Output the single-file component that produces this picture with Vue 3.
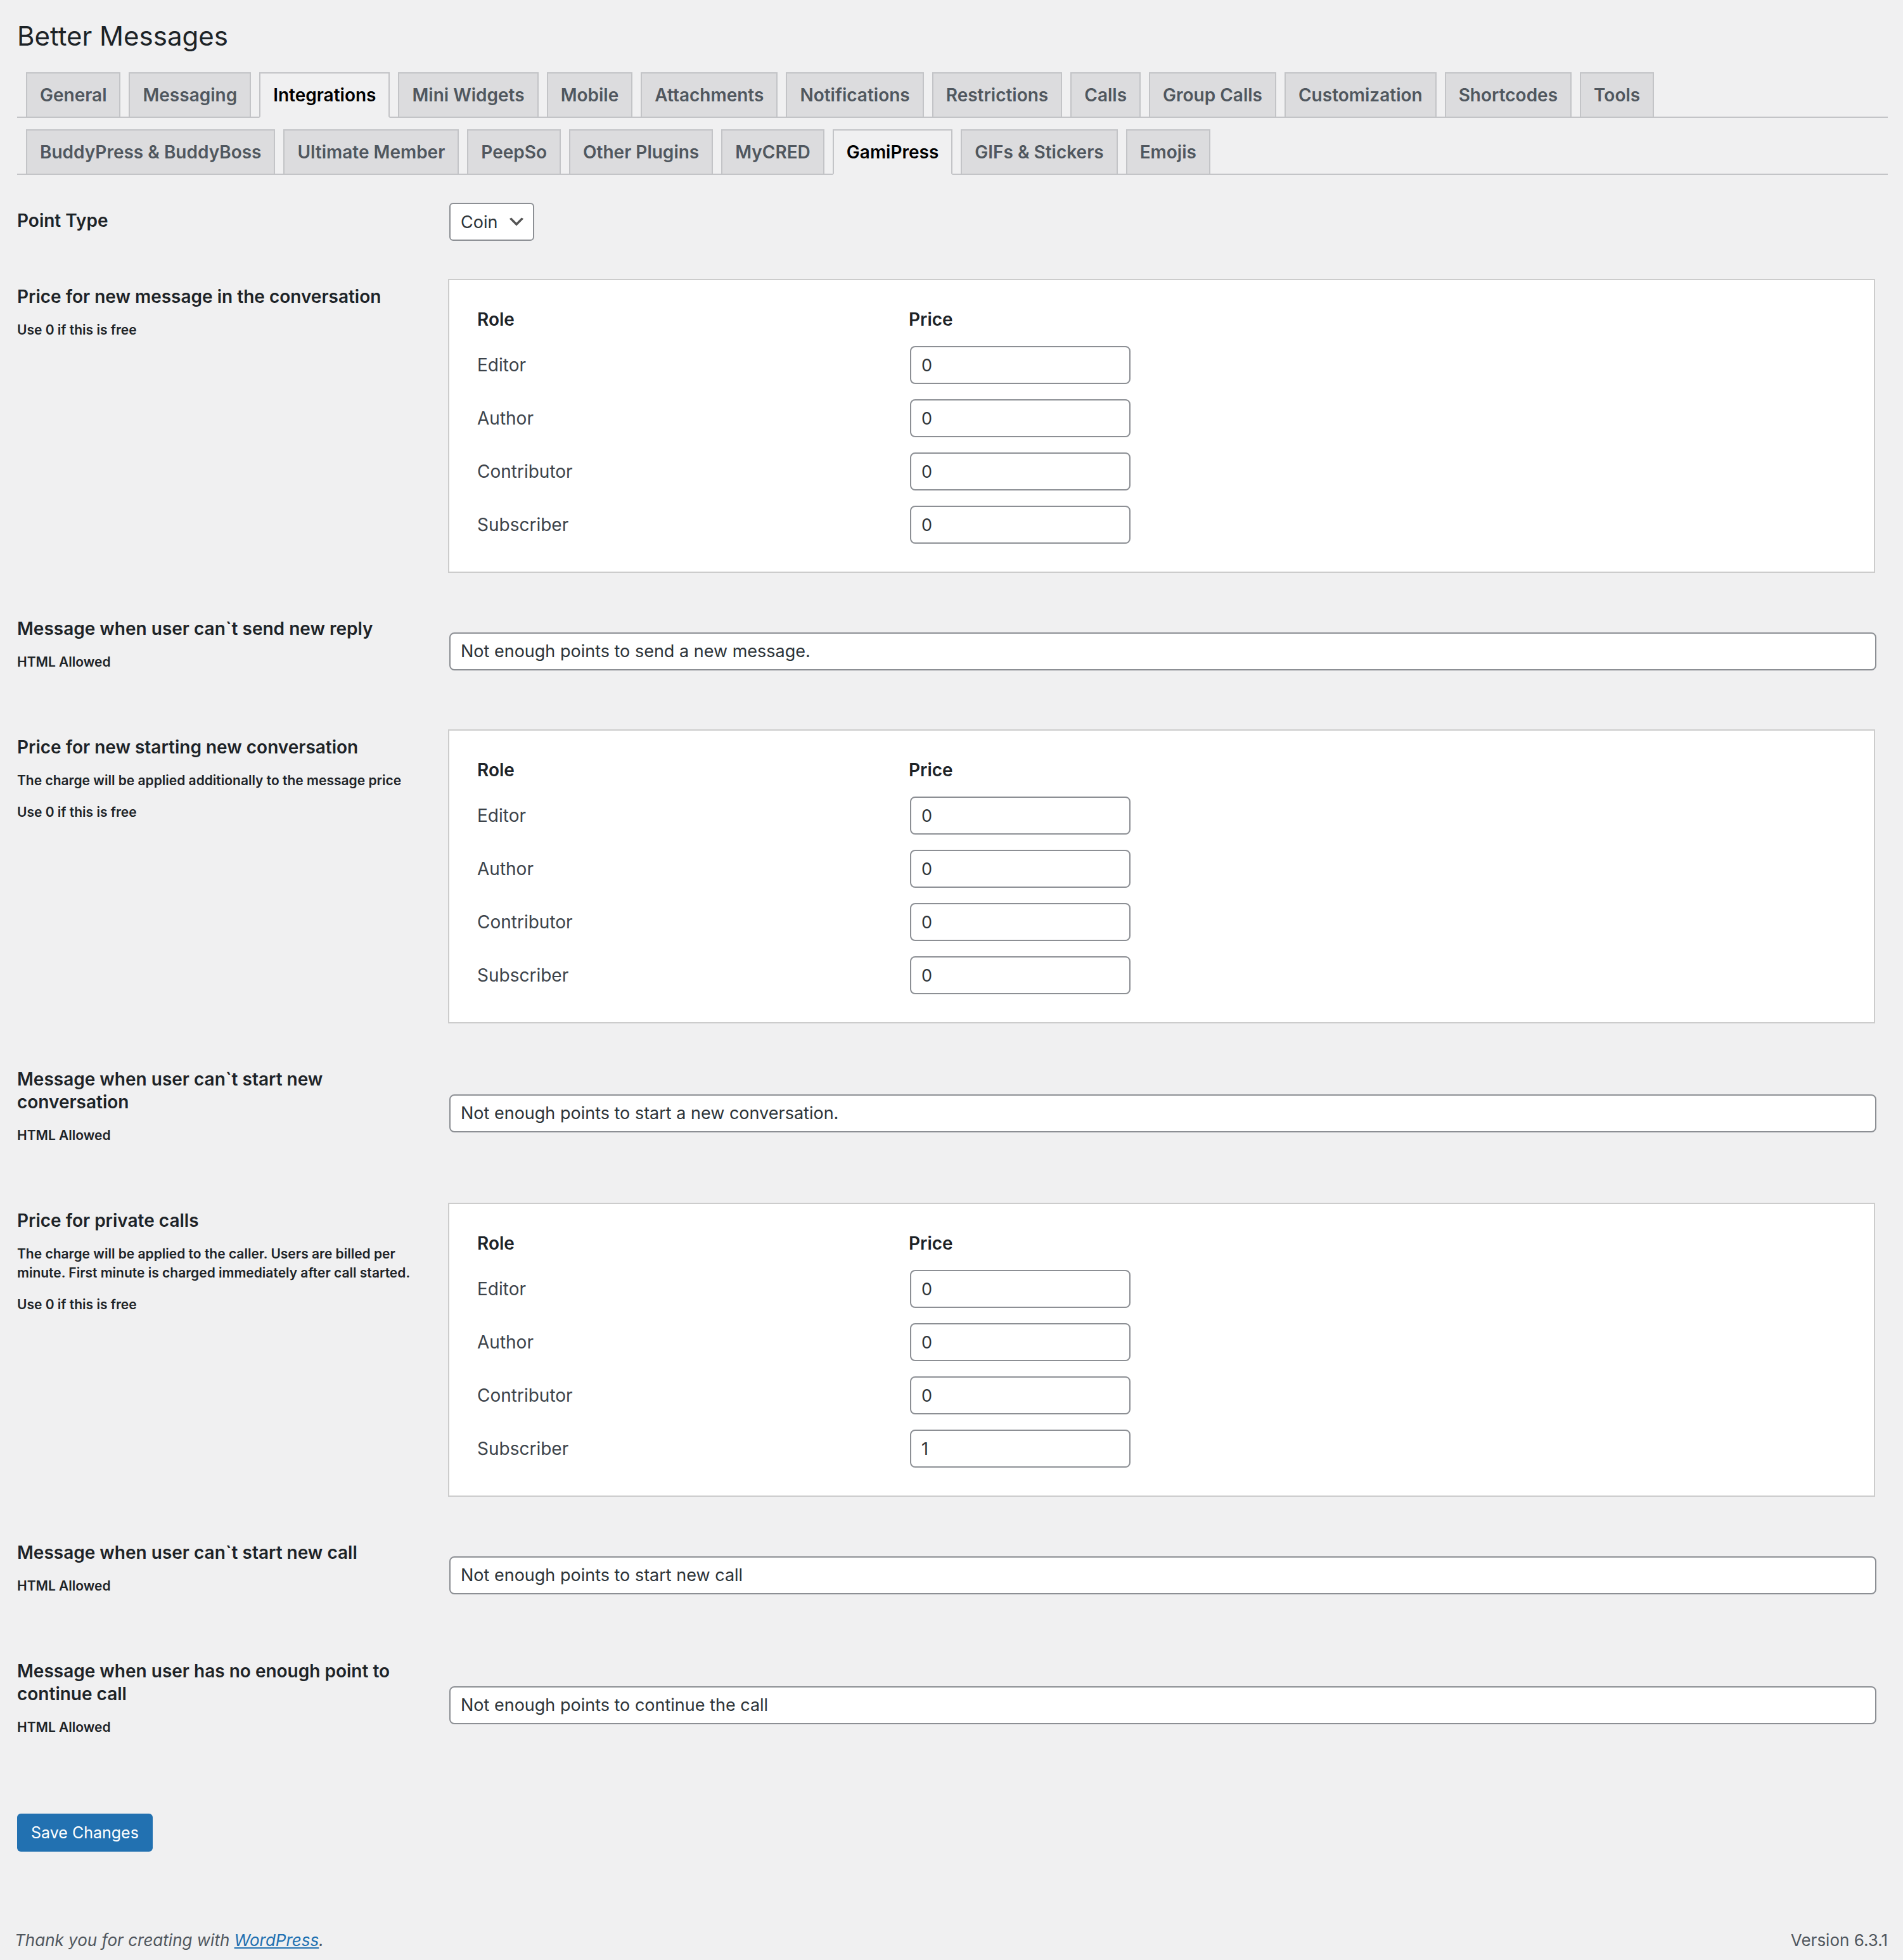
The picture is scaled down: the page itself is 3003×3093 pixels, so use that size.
<script setup>
import { ref, reactive } from 'vue'

const mainTabs = [
  'General',
  'Messaging',
  'Integrations',
  'Mini Widgets',
  'Mobile',
  'Attachments',
  'Notifications',
  'Restrictions',
  'Calls',
  'Group Calls',
  'Customization',
  'Shortcodes',
  'Tools',
]
const subTabs = [
  'BuddyPress & BuddyBoss',
  'Ultimate Member',
  'PeepSo',
  'Other Plugins',
  'MyCRED',
  'GamiPress',
  'GIFs & Stickers',
  'Emojis',
]
const activeTab = ref('Integrations')
const activeSubTab = ref('GamiPress')

const pointType = ref('Coin')
const roles = ['Editor', 'Author', 'Contributor', 'Subscriber']

const settings = reactive([
  {
    id: 'new-message-price',
    type: 'prices',
    title: 'Price for new message in the conversation',
    notes: ['Use 0 if this is free'],
    values: [0, 0, 0, 0],
  },
  {
    id: 'new-message-error',
    type: 'text',
    title: 'Message when user can`t send new reply',
    notes: ['HTML Allowed'],
    value: 'Not enough points to send a new message.',
  },
  {
    id: 'new-thread-price',
    type: 'prices',
    title: 'Price for new starting new conversation',
    notes: [
      'The charge will be applied additionally to the message price',
      'Use 0 if this is free',
    ],
    values: [0, 0, 0, 0],
  },
  {
    id: 'new-thread-error',
    type: 'text',
    title: 'Message when user can`t start new conversation',
    notes: ['HTML Allowed'],
    value: 'Not enough points to start a new conversation.',
  },
  {
    id: 'call-price',
    type: 'prices',
    title: 'Price for private calls',
    notes: [
      'The charge will be applied to the caller. Users are billed per minute. First minute is charged immediately after call started.',
      'Use 0 if this is free',
    ],
    values: [0, 0, 0, 1],
  },
  {
    id: 'call-start-error',
    type: 'text',
    title: 'Message when user can`t start new call',
    notes: ['HTML Allowed'],
    value: 'Not enough points to start new call',
  },
  {
    id: 'call-continue-error',
    type: 'text',
    title: 'Message when user has no enough point to continue call',
    notes: ['HTML Allowed'],
    value: 'Not enough points to continue the call',
  },
])
</script>

<template>
  <div class="wrap">
    <h1>Better Messages</h1>

    <nav class="nav-tabs">
      <a
        v-for="tab in mainTabs"
        :key="tab"
        href="#"
        class="nav-tab"
        :class="{ active: tab === activeTab }"
        @click.prevent="activeTab = tab"
      >{{ tab }}</a>
    </nav>
    <nav class="nav-tabs">
      <a
        v-for="tab in subTabs"
        :key="tab"
        href="#"
        class="nav-tab"
        :class="{ active: tab === activeSubTab }"
        @click.prevent="activeSubTab = tab"
      >{{ tab }}</a>
    </nav>

    <form class="settings" @submit.prevent>
      <div class="setting">
        <div class="setting-label">
          <label class="setting-title" for="point-type">Point Type</label>
        </div>
        <div class="setting-field">
          <div class="select-wrapper">
            <select id="point-type" v-model="pointType">
              <option>Coin</option>
            </select>
            <svg class="select-arrow" viewBox="0 0 20 20" aria-hidden="true">
              <path d="M5 6l5 5 5-5 2 1-7 7-7-7 2-1z" fill="#555" />
            </svg>
          </div>
        </div>
      </div>

      <div v-for="setting in settings" :key="setting.id" class="setting">
        <div class="setting-label">
          <label v-if="setting.type === 'text'" class="setting-title" :for="setting.id">
            {{ setting.title }}
          </label>
          <div v-else :id="setting.id" class="setting-title">{{ setting.title }}</div>
          <p v-for="note in setting.notes" :key="note">{{ note }}</p>
        </div>
        <div class="setting-field">
          <input
            v-if="setting.type === 'text'"
            :id="setting.id"
            v-model="setting.value"
            class="text-input"
            type="text"
          >
          <div v-else class="price-box">
            <table :aria-labelledby="setting.id">
              <thead>
                <tr>
                  <th class="role-col">Role</th>
                  <th>Price</th>
                </tr>
              </thead>
              <tbody>
                <tr v-for="(role, index) in roles" :key="role">
                  <td>
                    <label :for="setting.id + '-' + index">{{ role }}</label>
                  </td>
                  <td>
                    <input
                      :id="setting.id + '-' + index"
                      v-model="setting.values[index]"
                      class="price-input"
                      type="number"
                      min="0"
                    >
                  </td>
                </tr>
              </tbody>
            </table>
          </div>
        </div>
      </div>

      <button class="save-button" type="submit">Save Changes</button>
    </form>

    <footer>
      <p><em>Thank you for creating with <a href="https://wordpress.org/">WordPress</a>.</em></p>
      <p>Version 6.3.1</p>
    </footer>
  </div>
</template>

<style>
body {
  background: #f0f0f1;
}
</style>

<style scoped>
.wrap {
  padding: 18px 24px 0 27px;
  color: #3c434a;
  font-family: Inter, sans-serif;
  font-size: 28px;
  line-height: 36px;
}

h1 {
  margin: 0;
  padding-bottom: 18px;
  color: #1d2327;
  font-size: 42px;
  font-weight: 400;
  line-height: 78px;
}

.nav-tabs {
  display: flex;
  gap: 13px;
  padding-left: 14px;
  margin-bottom: 18px;
  border-bottom: 2px solid #c3c4c7;
}

.nav-tab {
  padding: 10px 20px;
  border: 2px solid #c3c4c7;
  border-bottom: none;
  background: #dcdcde;
  color: #50575e;
  font-size: 28px;
  font-weight: 600;
  line-height: 48px;
  text-decoration: none;
  white-space: nowrap;
}

.nav-tab.active {
  margin-bottom: -2px;
  border-bottom: 2px solid #f0f0f1;
  background: #f0f0f1;
  color: #000;
}

.settings {
  margin-top: -4px;
}

.setting {
  display: flex;
  align-items: center;
}

.setting-label {
  box-sizing: border-box;
  flex: none;
  align-self: flex-start;
  width: 660px;
  padding: 40px 20px 41px 0;
  color: #1d2327;
  font-weight: 600;
}

.setting-title {
  display: block;
}

.setting-label p {
  margin: 20px 0;
  font-size: 21px;
  line-height: 30px;
}

.setting-field {
  flex: 1;
  padding: 30px 20px;
}

input,
select {
  box-sizing: border-box;
  height: 60px;
  margin: 0 2px;
  padding: 0 16px;
  border: 2px solid #8c8f94;
  border-radius: 8px;
  background: #fff;
  color: #2c3338;
  font-family: inherit;
  font-size: 27px;
}

.text-input {
  display: block;
  width: 100%;
}

.select-wrapper {
  position: relative;
  display: inline-block;
  vertical-align: top;
}

select {
  display: block;
  width: 134px;
  padding-right: 48px;
  border-radius: 6px;
  appearance: none;
}

.select-arrow {
  position: absolute;
  top: 14px;
  right: 14px;
  width: 32px;
  height: 32px;
  pointer-events: none;
}

.price-box {
  padding: 32px 44px;
  border: 2px solid #ccc;
  background: #fff;
}

table {
  width: 100%;
  border-collapse: collapse;
}

th {
  height: 60px;
  padding: 0;
  color: #1d2327;
  font-weight: 600;
  text-align: left;
}

.role-col {
  width: 681px;
}

td {
  padding: 12px 0;
}

.price-input {
  display: block;
  width: 348px;
}

.save-button {
  height: 60px;
  margin-top: 60px;
  padding: 0 22px;
  border: none;
  border-radius: 6px;
  background: #2271b1;
  color: #fff;
  font-family: inherit;
  font-size: 25px;
}

footer {
  display: flex;
  justify-content: space-between;
  margin: 120px 0 0 -4px;
  padding-bottom: 12px;
  color: #50575e;
  font-size: 26px;
  line-height: 40px;
}

footer p {
  margin: 0;
}

footer a {
  color: #2271b1;
}
</style>
